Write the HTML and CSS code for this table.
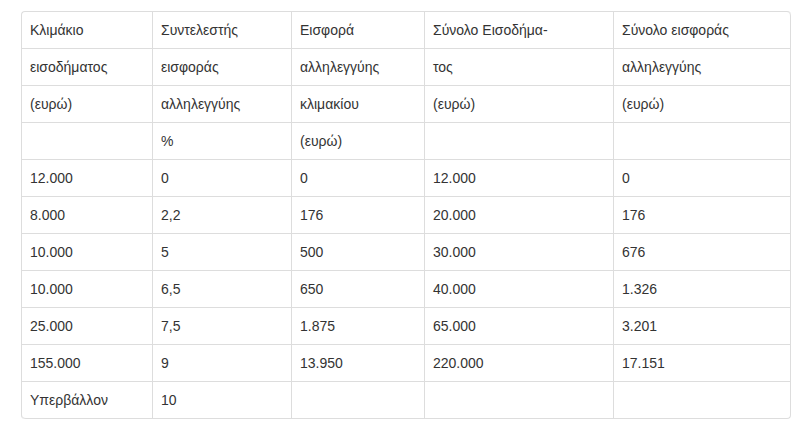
FILE: index.html
```html
<!DOCTYPE html>
<html lang="el">
<head>
<meta charset="utf-8">
<link rel="stylesheet" href="styles.css">
</head>
<body>
<div class="wrap">
<table class="grid">
<colgroup>
<col class="c1"><col class="c2"><col class="c3"><col class="c4"><col class="c5">
</colgroup>
<tbody>
<tr><td>Κλιμάκιο</td><td>Συντελεστής</td><td>Εισφορά</td><td>Σύνολο Εισοδήμα-</td><td>Σύνολο εισφοράς</td></tr>
<tr><td>εισοδήματος</td><td>εισφοράς</td><td>αλληλεγγύης</td><td>τος</td><td>αλληλεγγύης</td></tr>
<tr><td>(ευρώ)</td><td>αλληλεγγύης</td><td>κλιμακίου</td><td>(ευρώ)</td><td>(ευρώ)</td></tr>
<tr><td></td><td>%</td><td>(ευρώ)</td><td></td><td></td></tr>
<tr><td>12.000</td><td>0</td><td>0</td><td>12.000</td><td>0</td></tr>
<tr><td>8.000</td><td>2,2</td><td>176</td><td>20.000</td><td>176</td></tr>
<tr><td>10.000</td><td>5</td><td>500</td><td>30.000</td><td>676</td></tr>
<tr><td>10.000</td><td>6,5</td><td>650</td><td>40.000</td><td>1.326</td></tr>
<tr><td>25.000</td><td>7,5</td><td>1.875</td><td>65.000</td><td>3.201</td></tr>
<tr><td>155.000</td><td>9</td><td>13.950</td><td>220.000</td><td>17.151</td></tr>
<tr><td>Υπερβάλλον</td><td>10</td><td></td><td></td><td></td></tr>
</tbody>
</table>
</div>
</body>
</html>
```
FILE: styles.css
```css
html, body {
  margin: 0;
  padding: 0;
  background: #fff;
}
.wrap {
  padding: 11px 0 0 21px;
}
.grid {
  border-collapse: separate;
  border-spacing: 0;
  table-layout: fixed;
  width: 769px;
  border-top: 1px solid #ddd;
  border-left: 1px solid #ddd;
  border-radius: 4px;
  font-family: "Liberation Sans", Arial, sans-serif;
  font-size: 14px;
  color: #333;
}
.c1 { width: 131px; }
.c2 { width: 139px; }
.c3 { width: 133px; }
.c4 { width: 189px; }
.c5 { width: 177px; }
.grid td {
  height: 37px;
  padding: 0 8px;
  box-sizing: border-box;
  border-right: 1px solid #ddd;
  border-bottom: 1px solid #ddd;
  line-height: 20px;
  vertical-align: middle;
  text-align: left;
}
.grid tr:first-child td:last-child { border-top-right-radius: 4px; }
.grid tr:last-child td:first-child { border-bottom-left-radius: 4px; }
.grid tr:last-child td:last-child { border-bottom-right-radius: 4px; }
```
